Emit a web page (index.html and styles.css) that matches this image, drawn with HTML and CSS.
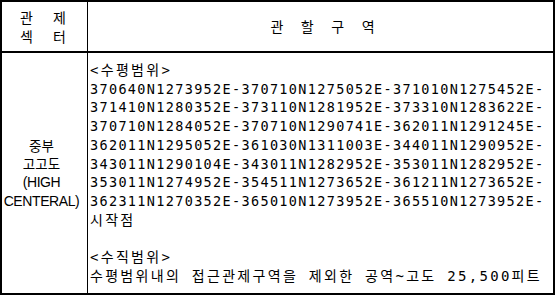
FILE: index.html
```html
<!DOCTYPE html>
<html lang="ko">
<head>
<meta charset="utf-8">
<link rel="stylesheet" href="styles.css">
</head>
<body>
<div class="sheet">
  <div class="cell head-left">
    <div class="pair"><span>관</span><span>제</span></div>
    <div class="pair"><span>섹</span><span>터</span></div>
  </div>
  <div class="cell head-right"><span>관</span><span>할</span><span>구</span><span>역</span></div>
  <div class="cell body-left">
    <div class="ko-l">중부</div>
    <div class="ko-l">고고도</div>
    <div class="latin">(HIGH</div>
    <div class="latin">CENTERAL)</div>
  </div>
  <div class="cell body-right">
    <div class="ko">&lt;수평범위&gt;</div>
    <div class="coord">370640N1273952E-370710N1275052E-371010N1275452E-</div>
    <div class="coord">371410N1280352E-373110N1281952E-373310N1283622E-</div>
    <div class="coord">370710N1284052E-370710N1290741E-362011N1291245E-</div>
    <div class="coord">362011N1295052E-361030N1311003E-344011N1290952E-</div>
    <div class="coord">343011N1290104E-343011N1282952E-353011N1282952E-</div>
    <div class="coord">353011N1274952E-354511N1273652E-361211N1273652E-</div>
    <div class="coord">362311N1270352E-365010N1273952E-365510N1273952E-</div>
    <div class="ko">시작점</div>
    <div class="blank"></div>
    <div class="ko">&lt;수직범위&gt;</div>
    <div class="ko last">수평범위내의 접근관제구역을 제외한 공역~고도 25,500피트</div>
  </div>
</div>
</body>
</html>
```
FILE: styles.css
```css
html, body {
  margin: 0;
  padding: 0;
  background: #fff;
}

.sheet {
  width: 555px;
  height: 295px;
  box-sizing: border-box;
  border: 2px solid #000;
  display: grid;
  grid-template-columns: 86px 1fr;
  grid-template-rows: 51px 1fr;
  color: #000;
  font-family: "DejaVu Sans Mono", "Noto Sans CJK KR", monospace;
}

.cell {
  box-sizing: border-box;
  min-width: 0;
}

.head-left {
  border-right: 1px solid #000;
  border-bottom: 2px solid #000;
  display: flex;
  flex-direction: column;
  justify-content: center;
  align-items: center;
  padding-right: 3px;
  font-family: "Noto Sans CJK KR", sans-serif;
  font-size: 14px;
  line-height: 19px;
}

.pair {
  display: flex;
  gap: 20px;
}

.head-right {
  border-bottom: 2px solid #000;
  display: flex;
  justify-content: center;
  align-items: center;
  gap: 17.5px;
  padding-left: 4px;
  font-family: "Noto Sans CJK KR", sans-serif;
  font-size: 14px;
  line-height: 19px;
}

.body-left {
  border-right: 1px solid #000;
  display: flex;
  flex-direction: column;
  justify-content: center;
  align-items: center;
  padding-right: 6px;
  line-height: 18.7px;
}

.ko-l {
  font-family: "Noto Sans CJK KR", sans-serif;
  font-size: 13.5px;
}

.latin {
  font-family: "Liberation Sans", sans-serif;
  font-size: 14px;
  letter-spacing: -0.4px;
}

.body-right {
  padding: 8px 0 0 2px;
  line-height: 18.7px;
  font-size: 13.5px;
  white-space: nowrap;
}

.coord {
  letter-spacing: 1.34px;
}

.ko {
  font-family: "DejaVu Sans Mono", "Noto Sans CJK KR", monospace;
  font-size: 14px;
  letter-spacing: 2.3px;
}

.ko.last {
  letter-spacing: 2.3px;
}

.blank {
  height: 18.7px;
}
```
